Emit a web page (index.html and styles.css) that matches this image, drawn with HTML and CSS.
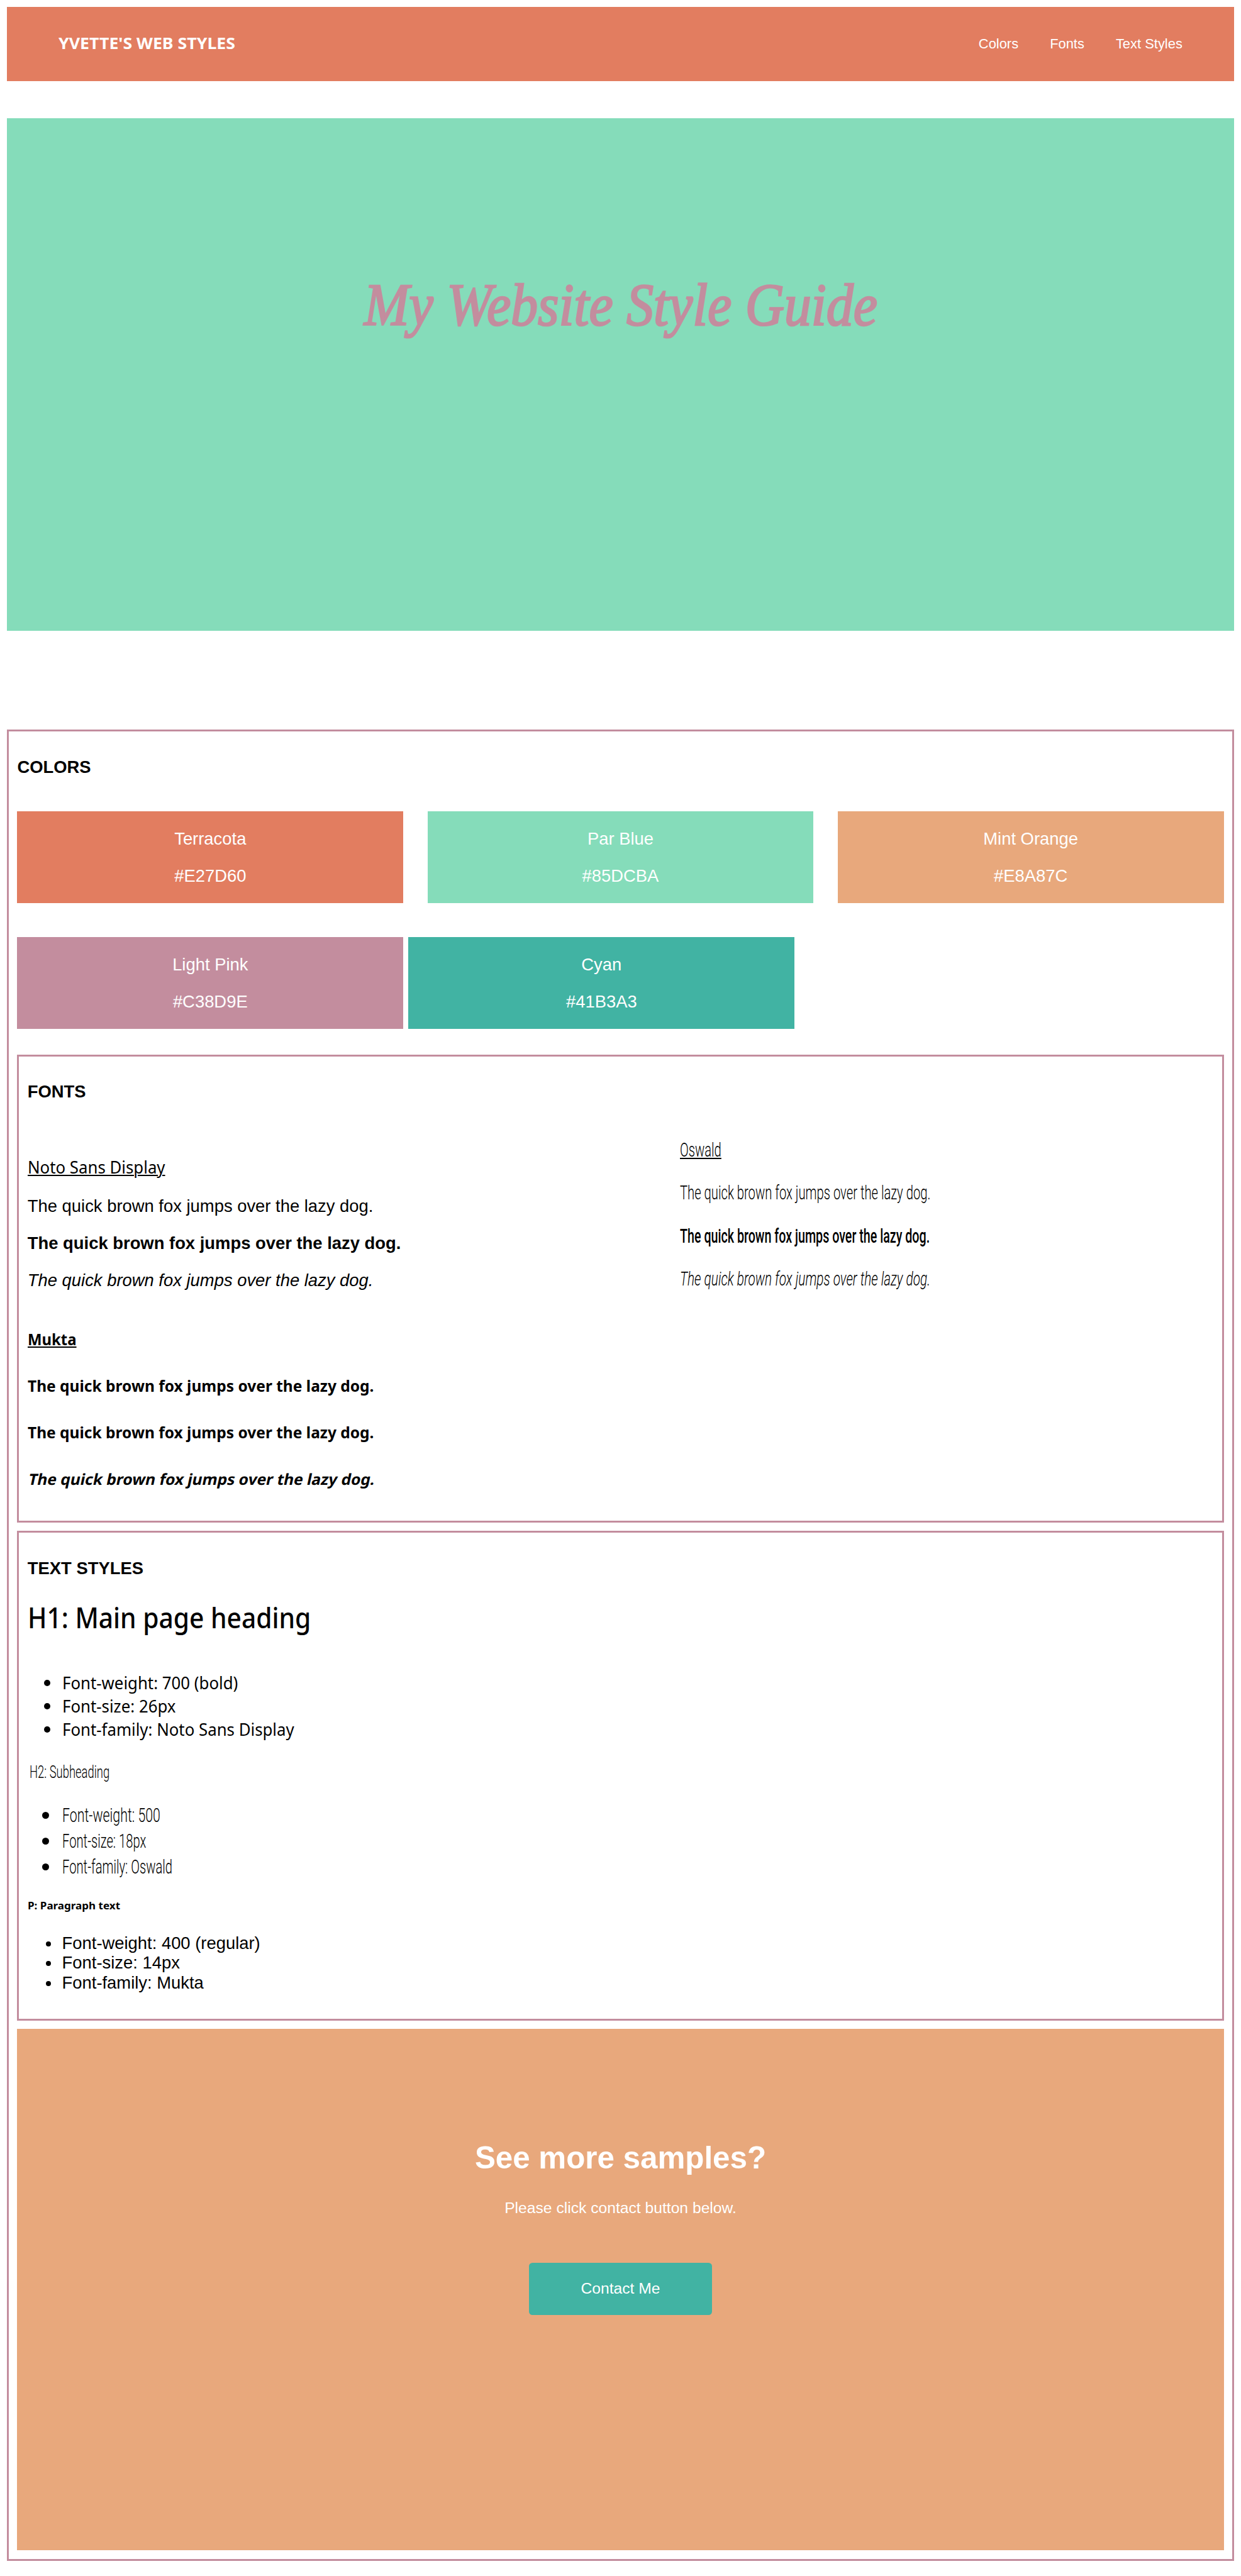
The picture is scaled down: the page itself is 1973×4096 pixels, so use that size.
FILE: index.html
```html
<!DOCTYPE html>
<html lang="en">
<head>
<meta charset="utf-8">
<title>Yvette's Web Styles</title>
<link rel="stylesheet" href="styles.css">
</head>
<body>
<header class="topbar">
  <div class="brand"><span>YVETTE'S WEB STYLES</span></div>
  <nav class="nav"><a>Colors</a><a>Fonts</a><a>Text Styles</a></nav>
</header>
<section class="hero"><h1><span>My Website Style Guide</span></h1></section>
<main class="guide">
  <h2 class="title">COLORS</h2>
  <div class="swatches">
    <div class="swatch terracota"><p>Terracota</p><p>#E27D60</p></div>
    <div class="swatch blue"><p>Par Blue</p><p>#85DCBA</p></div>
    <div class="swatch orange"><p>Mint Orange</p><p>#E8A87C</p></div>
  </div>
  <div class="swatches second">
    <div class="swatch pink"><p>Light Pink</p><p>#C38D9E</p></div>
    <div class="swatch cyan"><p>Cyan</p><p>#41B3A3</p></div>
  </div>
  <section class="panel fonts">
    <h2 class="title">FONTS</h2>
    <div class="columns">
      <div>
        <div class="noto">
          <h3><span>Noto Sans Display</span></h3>
          <p>The quick brown fox jumps over the lazy dog.</p>
          <p class="bold">The quick brown fox jumps over the lazy dog.</p>
          <p class="italic">The quick brown fox jumps over the lazy dog.</p>
        </div>
        <div class="mukta">
          <h3><span>Mukta</span></h3>
          <p><span>The quick brown fox jumps over the lazy dog.</span></p>
          <p><span>The quick brown fox jumps over the lazy dog.</span></p>
          <p class="slanted"><span>The quick brown fox jumps over the lazy dog.</span></p>
        </div>
      </div>
      <div class="oswald">
        <h3><span>Oswald</span></h3>
        <p><span>The quick brown fox jumps over the lazy dog.</span></p>
        <p class="semi"><span>The quick brown fox jumps over the lazy dog.</span></p>
        <p class="italic"><span>The quick brown fox jumps over the lazy dog.</span></p>
      </div>
    </div>
  </section>
  <section class="panel styles">
    <h2 class="title">TEXT STYLES</h2>
    <h3 class="h1-sample"><span>H1: Main page heading</span></h3>
    <ul class="list-noto">
      <li><span>Font-weight: 700 (bold)</span></li>
      <li><span>Font-size: 26px</span></li>
      <li><span>Font-family: Noto Sans Display</span></li>
    </ul>
    <h3 class="h2-sample"><span>H2: Subheading</span></h3>
    <ul class="list-oswald">
      <li class="wide"><span>Font-weight: 500</span></li>
      <li><span>Font-size: 18px</span></li>
      <li><span>Font-family: Oswald</span></li>
    </ul>
    <p class="p-sample"><span>P: Paragraph text</span></p>
    <ul class="list-plain">
      <li><span>Font-weight: 400 (regular)</span></li>
      <li><span>Font-size: 14px</span></li>
      <li><span>Font-family: Mukta</span></li>
    </ul>
  </section>
  <section class="contact">
    <h2>See more samples?</h2>
    <p>Please click contact button below.</p>
    <a class="button">Contact Me</a>
  </section>
</main>
</body>
</html>
```
FILE: styles.css
```css
html { font-size: 13.7014px; }
* { box-sizing: border-box; margin: 0; padding: 0; }
body {
  padding: .8rem;
  background: #fff;
  color: #000;
  font-family: "Liberation Sans", Arial, sans-serif;
  font-size: 2rem;
  line-height: 2.3rem;
}
span { display: inline-block; transform-origin: left center; white-space: nowrap; }

.topbar {
  height: 8.6rem;
  padding: 0 6rem;
  display: flex;
  align-items: center;
  justify-content: space-between;
  background: #E27D60;
  color: #fff;
}
.brand { font: 700 1.88rem/2.6rem "Noto Sans", sans-serif; padding-bottom: .2rem; }
.brand span { transform: scaleX(1.037); }
.nav { display: flex; gap: 3.65rem; font-size: 1.6rem; line-height: 1.8rem; }

.hero { margin-top: 4.3rem; height: 59.5rem; padding-top: 17.25rem; background: #85DCBA; text-align: center; }
.hero h1 {
  font: italic 400 7rem/9rem "Liberation Serif", serif;
  color: #C38D9E;
  -webkit-text-stroke: .2rem #C38D9E;
}
.hero h1 span { transform-origin: center; transform: scaleX(.897); }

.guide { margin-top: 11.5rem; height: 212.5rem; border: 3px solid #C38D9E; padding: .98rem; }
.title { font-size: 2rem; line-height: 2.3rem; margin-top: 1.98rem; }

.swatches { margin-top: 4rem; display: flex; gap: 2.8rem; }
.swatches.second { gap: .6rem; }
.swatch { width: 44.8rem; height: 10.6rem; padding: 2rem 0; display: flex; flex-direction: column; gap: 2rem; text-align: center; color: #fff; }
.terracota { background: #E27D60; }
.blue { background: #85DCBA; }
.orange { background: #E8A87C; }
.pink { background: #C38D9E; }
.cyan { background: #41B3A3; }

.panel { border: 3px solid #C38D9E; padding: .98rem; overflow: hidden; }
.fonts { margin-top: 3rem; height: 54.3rem; }
.styles { margin-top: 1rem; height: 56.8rem; }
.columns { display: grid; grid-template-columns: 75.7rem 1fr; margin-top: 2rem; }

h3 { font-weight: 400; }
.bold { font-weight: 700; }
.italic { font-style: italic; }
.fonts h3 span { text-decoration: underline; text-decoration-thickness: .18rem; text-underline-offset: .15rem; }

.noto { display: grid; row-gap: 2rem; padding-top: 4.25rem; }
.noto h3 { font: 400 2rem/2.7rem "Noto Sans", sans-serif; }
.noto h3 span, .list-noto span { transform: scaleX(.942); }

.mukta { display: grid; row-gap: 2.1rem; margin-top: 4.1rem; font: 700 1.78rem/3.3rem "Noto Sans", sans-serif; }
.mukta h3 { font-size: inherit; font-weight: 700; }
.mukta h3 span { transform: scaleX(.98); }
.mukta p span { transform: scaleX(1.006); }
.mukta .slanted span { transform-origin: left 70%; transform: skewX(-12deg) scaleX(1.006); }

.oswald { display: grid; align-content: start; row-gap: 2rem; padding-top: 2.1rem; font: 300 2.3rem/3rem Roboto, sans-serif; }
.oswald h3 { font-size: inherit; font-weight: 300; }
.oswald span, .list-oswald span { transform: scaleX(.642); }
.oswald .semi { font-weight: 500; }
.oswald .semi span { transform: scaleX(.625); }
.oswald .italic span { transform: scaleX(.66); }

.h1-sample { font: 500 3.3rem/4.4rem "Noto Sans", sans-serif; margin-top: 2.35rem; }
.h1-sample span { transform: scaleX(.901); }
.h2-sample { font: 300 2.04rem/2.7rem Roboto, sans-serif; margin-top: 2.26rem; padding-left: .2rem; }
.h2-sample span { transform: scaleX(.66); }
.p-sample { font: 700 1.22rem/2.4rem "Noto Sans", sans-serif; margin-top: 1.83rem; }
.p-sample span { transform: scaleX(1.02); }

ul { list-style: none; }
li { display: flex; align-items: flex-start; }
li::before { content: ""; flex: none; border-radius: 50%; background: #000; }
.list-noto { font: 400 2rem/2.7rem "Noto Sans", sans-serif; margin-top: 4.05rem; }
.list-noto li::before { width: .72rem; height: .72rem; margin: 1.02rem 1.39rem 0 1.89rem; }
.list-oswald { font: 300 2.3rem/3rem Roboto, sans-serif; margin-top: 2.16rem; }
.list-oswald .wide span { transform: scaleX(.677); }
.list-oswald li::before { width: .8rem; height: .8rem; margin: 1.09rem 1.5rem 0 1.7rem; }
.list-plain { margin-top: 1.93rem; }
.list-plain li::before { width: .6rem; height: .6rem; margin: .94rem 1.3rem 0 2.1rem; }

.contact {
  margin-top: 1rem;
  height: 60.5rem;
  padding-top: 12.9rem;
  display: flex;
  flex-direction: column;
  align-items: center;
  background: #E8A87C;
  color: #fff;
  font-size: 1.8rem;
  line-height: 2.1rem;
}
.contact h2 { font-size: 3.6rem; line-height: 4.1rem; }
.contact p { margin-top: 2.73rem; }
.button { margin-top: 5.27rem; width: 21.2rem; height: 6.1rem; padding-top: 2rem; border-radius: .4rem; background: #41B3A3; text-align: center; }
```
